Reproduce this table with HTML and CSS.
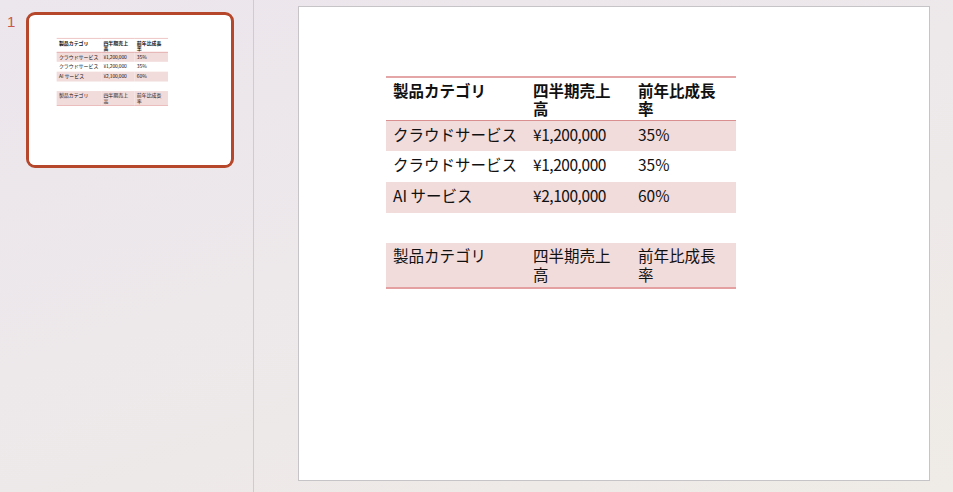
FILE: index.html
```html
<!DOCTYPE html>
<html lang="ja">
<head>
<meta charset="utf-8">
<title>スライド</title>
<link rel="stylesheet" href="styles.css">
</head>
<body>
<div class="app">
  <aside class="pane">
    <div class="thumb-row">
      <span class="num">1</span>
      <div class="thumb">
        <div class="thumb-inner">
          <div class="slide slide-mini">
            <table class="tbl tbl-main">
              <thead><tr><th class="c1">製品カテゴリ</th><th class="c2">四半期売上高</th><th class="c3">前年比成長率</th></tr></thead>
              <tbody>
                <tr class="odd"><td>クラウドサービス</td><td class="num-col">¥1,200,000</td><td>35%</td></tr>
                <tr><td>クラウドサービス</td><td class="num-col">¥1,200,000</td><td>35%</td></tr>
                <tr class="odd"><td>AI サービス</td><td class="num-col">¥2,100,000</td><td>60%</td></tr>
              </tbody>
            </table>
            <table class="tbl tbl-second">
              <tbody><tr><td class="c1">製品カテゴリ</td><td class="c2">四半期売上高</td><td class="c3">前年比成長率</td></tr></tbody>
            </table>
          </div>
        </div>
      </div>
    </div>
  </aside>
  <main class="stage">
    <div class="slide">
      <table class="tbl tbl-main">
        <thead><tr><th class="c1">製品カテゴリ</th><th class="c2">四半期売上高</th><th class="c3">前年比成長率</th></tr></thead>
        <tbody>
          <tr class="odd"><td>クラウドサービス</td><td class="num-col">¥1,200,000</td><td>35%</td></tr>
          <tr><td>クラウドサービス</td><td class="num-col">¥1,200,000</td><td>35%</td></tr>
          <tr class="odd"><td>AI サービス</td><td class="num-col">¥2,100,000</td><td>60%</td></tr>
        </tbody>
      </table>
      <table class="tbl tbl-second">
        <tbody><tr><td class="c1">製品カテゴリ</td><td class="c2">四半期売上高</td><td class="c3">前年比成長率</td></tr></tbody>
      </table>
    </div>
  </main>
</div>
</body>
</html>
```
FILE: styles.css
```css
* { box-sizing: border-box; }
html, body {
  margin: 0;
  width: 953px;
  height: 492px;
  overflow: hidden;
}
body {
  font-family: "Noto Sans CJK JP", sans-serif;
  background: linear-gradient(160deg, #ece6ed 0%, #ede8ea 45%, #efebe6 100%);
}
.app {
  display: flex;
  height: 492px;
}
.pane {
  width: 254px;
  flex: none;
  border-right: 1px solid #cfcbcf;
  padding-top: 12px;
}
.thumb-row {
  display: flex;
  align-items: flex-start;
}
.num {
  width: 26px;
  padding-left: 7px;
  font-family: "Liberation Sans", sans-serif;
  font-size: 15px;
  line-height: 16px;
  color: #c9584a;
  margin-top: 2px;
}
.thumb {
  width: 208px;
  height: 156px;
  border: 3px solid #b7472a;
  border-radius: 9px;
  background: #fff;
  overflow: hidden;
  padding: 1px 0 0 0;
}
.thumb-inner {
  width: 201px;
  height: 150px;
  overflow: hidden;
}
.slide-mini {
  transform: scale(0.318);
  transform-origin: 0 0;
  border: none !important;
}
.stage {
  flex: 1;
  padding: 6px 0 0 44px;
}
.slide {
  width: 632px;
  height: 475px;
  background: #fff;
  border: 1px solid #c6c4c6;
  padding: 69px 0 0 87px;
}
.tbl {
  border-collapse: collapse;
  width: 350px;
  table-layout: fixed;
  font-size: 15.5px;
  color: #111;
}
.tbl th, .tbl td {
  text-align: left;
  vertical-align: top;
  padding: 0 0 0 7px;
  font-weight: normal;
}
.tbl td { white-space: nowrap; }
.tbl td.c2, .tbl td.c3 { white-space: normal; }
.num-col { letter-spacing: -0.45px; }
.c1 { width: 140px; }
.c2 { width: 105px; }
.c3 { width: 105px; }
.tbl-main thead tr {
  border-top: 2px solid #e4a6a6;
  border-bottom: 1px solid #d98f8f;
}
.tbl-main th {
  font-weight: bold;
  height: 43px;
  line-height: 18px;
  padding-top: 3px;
  padding-right: 6px;
}
.tbl-main td {
  height: 31px;
  line-height: 21px;
  padding-top: 3px;
}
.tbl-main tr.odd td { background: #f2dbdb; }
.tbl-second {
  margin-top: 30px;
}
.tbl-second tr {
  border-bottom: 2px solid #e4a0a0;
}
.tbl-second td {
  background: #f2dbdb;
  height: 45px;
  line-height: 19px;
  padding-top: 3px;
  padding-right: 6px;
}
```
